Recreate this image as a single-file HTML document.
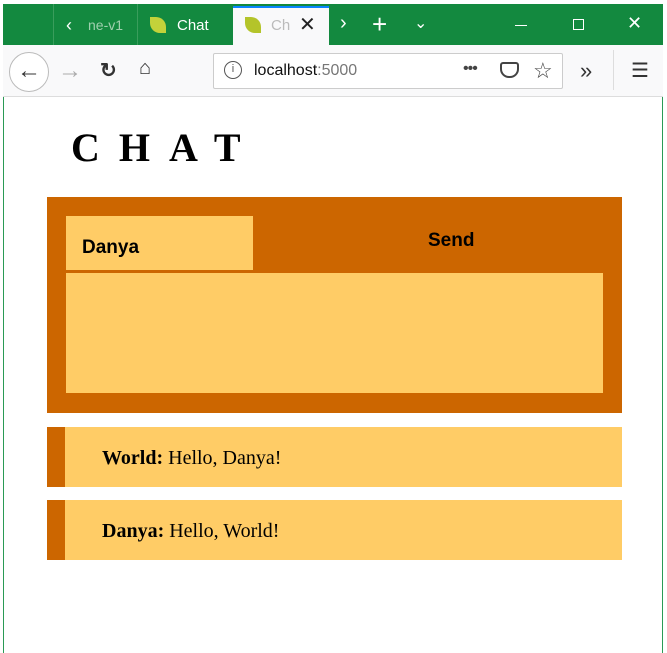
<!DOCTYPE html>
<html><head><style>
*{margin:0;padding:0;box-sizing:border-box}
body{width:667px;height:653px;background:#fff;position:relative;overflow:hidden;font-family:"Liberation Sans",sans-serif}
.a{position:absolute}
</style></head><body>
<div class="a" style="left:0;top:0;width:667px;height:4px;background:#fff"></div>
<div class="a" style="left:3px;top:4px;width:660px;height:41px;background:#13893f"></div>
<div class="a" style="left:53px;top:4px;width:1px;height:41px;background:#3a9d5c"></div>
<div class="a" style="left:137px;top:4px;width:1px;height:41px;background:#3a9d5c"></div>
<div class="a" style="left:66px;top:15px;color:#fff;font-size:18px">&lsaquo;</div>
<div class="a" style="left:88px;top:17px;color:#9fd0ae;font-size:14px">ne-v1</div>
<div class="a" style="left:150px;top:17px;width:16px;height:16px;border-radius:0 10px 0 10px;background:#c3d23a"></div>
<div class="a" style="left:177px;top:17px;color:#fff;font-size:15px">Chat</div>
<div class="a" style="left:233px;top:6px;width:96px;height:39px;background:#f9f9fa;border-top:2px solid #0a84ff"></div>
<div class="a" style="left:245px;top:17px;width:16px;height:16px;border-radius:0 10px 0 10px;background:#b4c42a"></div>
<div class="a" style="left:271px;top:17px;color:#bbb;font-size:15px">Ch</div>
<div class="a" style="left:299px;top:12px;color:#222;font-size:20px">✕</div>
<div class="a" style="left:340px;top:12px;color:#fff;font-size:20px">&rsaquo;</div>
<div class="a" style="left:372px;top:9px;color:#fff;font-size:26px;font-weight:300">+</div>
<div class="a" style="left:414px;top:13px;color:#fff;font-size:16px">&#8964;</div>
<div class="a" style="left:515px;top:25px;width:12px;height:1px;background:#fff"></div>
<div class="a" style="left:573px;top:19px;width:11px;height:11px;border:1px solid #fff"></div>
<div class="a" style="left:627px;top:13px;color:#fff;font-size:18px">✕</div>
<div class="a" style="left:3px;top:45px;width:660px;height:52px;background:#f9f9fa;border-bottom:1px solid #ddd"></div>
<div class="a" style="left:9px;top:52px;width:40px;height:40px;border:1px solid #bbb;border-radius:50%;background:#fff;font-size:24px;text-align:center;line-height:36px;color:#333">&larr;</div>
<div class="a" style="left:58px;top:57px;font-size:24px;color:#aaa">&rarr;</div>
<div class="a" style="left:100px;top:58px;font-size:20px;color:#333;font-weight:bold">&#8635;</div>
<div class="a" style="left:139px;top:57px;font-size:20px;color:#333">&#8962;</div>
<div class="a" style="left:213px;top:53px;width:350px;height:36px;background:#fff;border:1px solid #ccc;border-radius:2px"></div>
<div class="a" style="left:224px;top:61px;width:18px;height:18px;border:1.5px solid #555;border-radius:50%;font-size:11px;text-align:center;line-height:15px;color:#555">i</div>
<div class="a" style="left:254px;top:62px;font-size:16px;color:#111">localhost<span style="color:#777">:5000</span></div>
<div class="a" style="left:463px;top:60px;font-size:16px;color:#444;letter-spacing:-1px">•••</div>
<div class="a" style="left:500px;top:62px;width:19px;height:16px;border:2px solid #444;border-radius:3px 3px 9px 9px"></div>
<div class="a" style="left:533px;top:58px;font-size:22px;color:#444">☆</div>
<div class="a" style="left:580px;top:58px;font-size:22px;color:#333">»</div>
<div class="a" style="left:613px;top:50px;width:1px;height:40px;background:#ddd"></div>
<div class="a" style="left:631px;top:58px;font-size:20px;color:#333">☰</div>
<div class="a" style="left:3px;top:97px;width:1px;height:556px;background:#2a9a55"></div>
<div class="a" style="left:662px;top:97px;width:1px;height:556px;background:#2a9a55"></div>

<div class="a" style="left:71px;top:124px;font-family:'Liberation Serif',serif;font-weight:bold;font-size:40px;letter-spacing:19px;color:#000">CHAT</div>
<div class="a" style="left:47px;top:197px;width:575px;height:216px;background:#cc6600"></div>
<div class="a" style="left:66px;top:216px;width:187px;height:54px;background:#ffcc66"></div>
<div class="a" style="left:82px;top:237px;font-size:19px;font-weight:bold">Danya</div>
<div class="a" style="left:428px;top:230px;font-size:19px;font-weight:bold">Send</div>
<div class="a" style="left:66px;top:273px;width:537px;height:120px;background:#ffcc66"></div>
<div class="a" style="left:47px;top:427px;width:575px;height:60px;background:#ffcc66;border-left:18px solid #cc6600"></div>
<div class="a" style="left:102px;top:447px;font-family:'Liberation Serif',serif;font-size:20px"><b>World:</b> Hello, Danya!</div>
<div class="a" style="left:47px;top:500px;width:575px;height:60px;background:#ffcc66;border-left:18px solid #cc6600"></div>
<div class="a" style="left:102px;top:520px;font-family:'Liberation Serif',serif;font-size:20px"><b>Danya:</b> Hello, World!</div>
</body></html>
